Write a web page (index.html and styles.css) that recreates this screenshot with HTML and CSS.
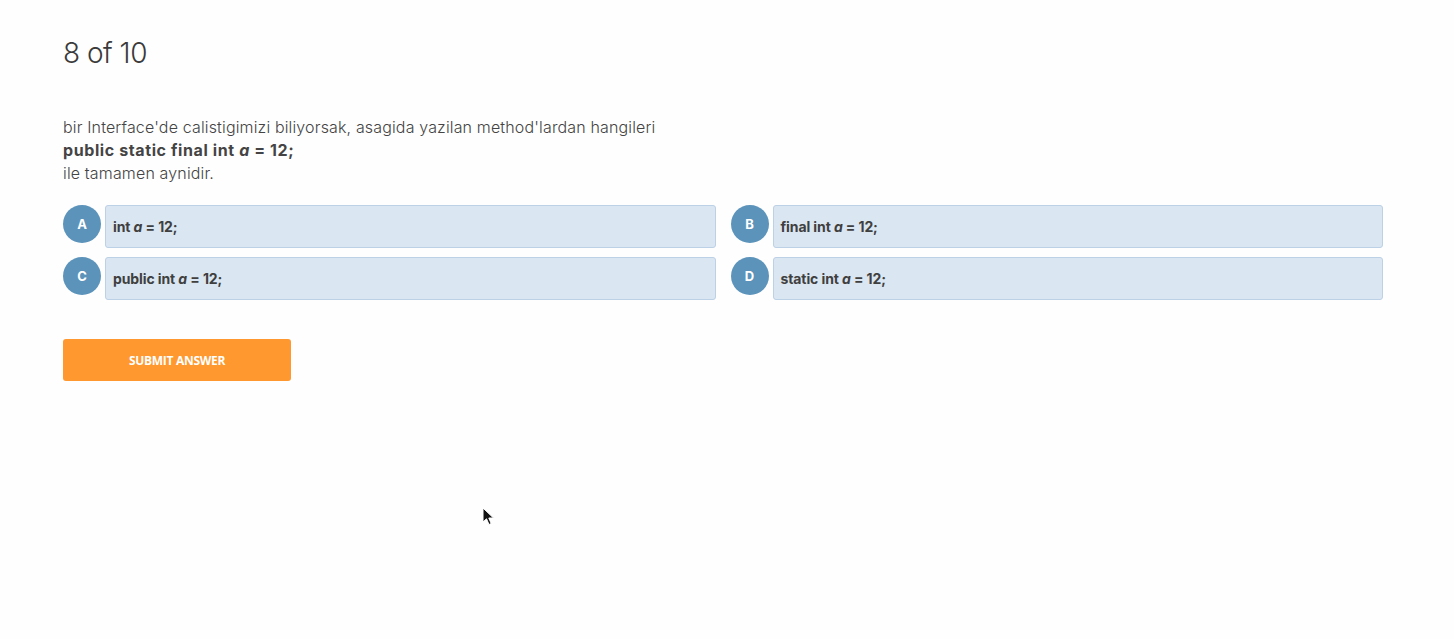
FILE: index.html
```html
<!DOCTYPE html>
<html lang="tr">
<head>
<meta charset="utf-8">
<title>Quiz</title>
<link rel="stylesheet" href="styles.css">
</head>
<body>
<main class="quiz">
  <h1 class="counter">8 of 10</h1>
  <div class="question">
    <p>bir Interface'de calistigimizi biliyorsak, asagida yazilan method'lardan hangileri</p>
    <p class="code">public static final int <em>a</em> = 12;</p>
    <p>ile tamamen aynidir.</p>
  </div>
  <div class="options">
    <div class="option"><span class="letter">A</span><div class="answer"><span>int <em>a</em> = 12;</span></div></div>
    <div class="option"><span class="letter">B</span><div class="answer"><span>final int <em>a</em> = 12;</span></div></div>
    <div class="option"><span class="letter">C</span><div class="answer"><span>public int <em>a</em> = 12;</span></div></div>
    <div class="option"><span class="letter">D</span><div class="answer"><span>static int <em>a</em> = 12;</span></div></div>
  </div>
  <button class="submit" type="button">SUBMIT ANSWER</button>
</main>
<svg class="cursor" width="13" height="20" viewBox="0 0 13 20" aria-hidden="true">
  <path d="M1 1 L1 15 L4.5 11.8 L7 17.5 L9.2 16.5 L6.8 11 L11.5 11 Z" fill="#111" stroke="#fff" stroke-width="1" stroke-linejoin="round"/>
</svg>
</body>
</html>
```
FILE: styles.css
```css
html, body {
  margin: 0;
  padding: 0;
  background: #fefefe;
}
body {
  font-family: Inter, "Noto Sans", "Liberation Sans", sans-serif;
  color: #444;
  min-height: 639px;
  position: relative;
}
.quiz {
  padding: 36px 71px 0 63px;
}
.counter {
  margin: 0;
  font-size: 28px;
  font-weight: 300;
  line-height: 34px;
  letter-spacing: -0.5px;
  color: #3a3a3a;
}
.question {
  margin-top: 46px;
  font-size: 16px;
  line-height: 23px;
  letter-spacing: 0.15px;
  color: #444;
}
.question p {
  margin: 0;
  font-weight: 300;
}
.question .code {
  font-weight: 700;
  letter-spacing: 0.6px;
}
.question em, .answer em {
  font-style: italic;
}
.options {
  margin-top: 20px;
  display: grid;
  grid-template-columns: 1fr 1fr;
  column-gap: 15px;
  row-gap: 9px;
}
.option {
  display: flex;
  align-items: flex-start;
  gap: 4px;
}
.letter {
  flex: none;
  width: 38px;
  height: 38px;
  border-radius: 50%;
  background: #5b93bb;
  color: #fff;
  font-size: 13px;
  font-weight: 700;
  display: flex;
  align-items: center;
  justify-content: center;
}
.answer {
  flex: 1;
  height: 43px;
  box-sizing: border-box;
  border: 1px solid #bcd0e6;
  border-radius: 3px;
  background: #dae6f1;
  padding: 0 7px;
  display: flex;
  align-items: center;
  font-size: 14px;
  font-weight: 700;
  letter-spacing: -0.1px;
  color: #3f3f3f;
}
.submit {
  margin-top: 39px;
  width: 228px;
  height: 42px;
  border: none;
  border-radius: 3px;
  background: #ff982e;
  color: #fff;
  font-family: "Open Sans", "Liberation Sans", sans-serif;
  font-size: 12px;
  font-weight: 700;
  letter-spacing: -0.3px;
  cursor: pointer;
}
.cursor {
  position: absolute;
  left: 482px;
  top: 507px;
}
```
